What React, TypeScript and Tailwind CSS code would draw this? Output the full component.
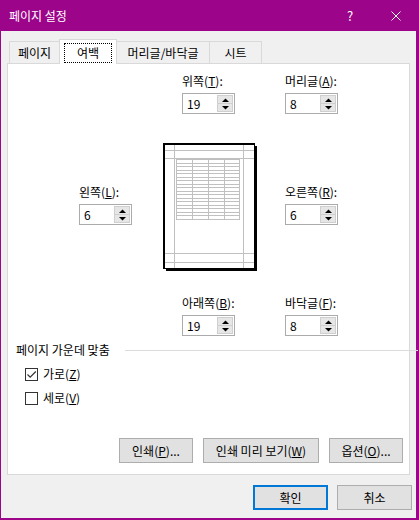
import React from "react";

const Up = () => (
  <svg width="7" height="4" viewBox="0 0 7 4">
    <polygon points="0,4 3.5,0.5 7,4" fill="#000" />
  </svg>
);
const Down = () => (
  <svg width="7" height="4" viewBox="0 0 7 4">
    <polygon points="0,0 3.5,3.5 7,0" fill="#000" />
  </svg>
);

function Field({ name, acc, value }: { name: string; acc: string; value: string }) {
  return (
    <div className="w-[53px] flex flex-col shrink-0">
      <div className="h-[16px] leading-[16px] text-[12px] whitespace-nowrap">
        {name}(<u className="underline-offset-[1px]">{acc}</u>):
      </div>
      <div className="mt-[4px] h-[21px] border border-[#ababab] bg-white flex">
        <div className="flex-1 pl-[4px] text-[12px] leading-[19px]">{value}</div>
        <div className="w-[16px] my-[1px] mr-[1px] flex flex-col">
          <div className="flex-1 bg-[#e6e6e6] border border-[#cfcfcf] flex items-center justify-center">
            <Up />
          </div>
          <div className="flex-1 -mt-px bg-[#e6e6e6] border border-[#cfcfcf] flex items-center justify-center">
            <Down />
          </div>
        </div>
      </div>
    </div>
  );
}

function Preview() {
  const rows: number[] = [];
  for (let i = 0; i <= 17; i++) rows.push(16 + Math.round(i * 3.5) + 0.5);
  const g = "#c0c0c0";
  return (
    <svg width="94" height="128" viewBox="0 0 94 128" shapeRendering="crispEdges" className="shrink-0">
      <rect x="3" y="3" width="91" height="125" fill="#000" />
      <rect x="0" y="0" width="92" height="126" fill="#000" />
      <rect x="2" y="2" width="89" height="123" fill="#fff" />
      <line x1="11.5" y1="2" x2="11.5" y2="125" stroke={g} />
      <line x1="80.5" y1="2" x2="80.5" y2="125" stroke={g} />
      <line x1="2" y1="7.5" x2="91" y2="7.5" stroke={g} />
      <line x1="2" y1="15.5" x2="91" y2="15.5" stroke={g} />
      <line x1="2" y1="110.5" x2="91" y2="110.5" stroke={g} />
      <line x1="2" y1="119.5" x2="91" y2="119.5" stroke={g} />
      {rows.map((y) => (
        <line key={y} x1="13" y1={y} x2="77" y2={y} stroke={g} />
      ))}
      {[13.5, 29.5, 45.5, 61.5, 76.5].map((x) => (
        <line key={x} x1={x} y1="16" x2={x} y2={rows[rows.length - 1]} stroke={g} />
      ))}
    </svg>
  );
}

function Btn({ w, children }: { w: string; children: React.ReactNode }) {
  return (
    <div
      className={`${w} h-[25px] border border-[#adadad] bg-[#e1e1e1] flex items-center justify-center text-[12px] whitespace-nowrap`}
    >
      {children}
    </div>
  );
}

export default function App() {
  return (
    <div className="w-[419px] h-[520px] bg-[#9c0589] flex flex-col font-['Noto_Sans_CJK_KR','Noto_Sans',sans-serif] text-black overflow-hidden">
      {/* Title bar */}
      <div className="h-[31px] flex items-center text-white shrink-0">
        <span className="ml-[9px] text-[12px] leading-[16px]">페이지 설정</span>
        <div className="flex-1" />
        <div className="w-[46px] h-full flex items-center justify-center text-[13px]">?</div>
        <div className="w-[46px] h-full flex items-center justify-center">
          <svg width="10" height="10" viewBox="0 0 10 10">
            <path d="M0.5 0.5 L9.5 9.5 M9.5 0.5 L0.5 9.5" stroke="#fff" strokeWidth="1" />
          </svg>
        </div>
      </div>

      {/* Body */}
      <div className="flex-1 bg-[#f0f0f0] ml-[1px] mr-[3px] mb-[2px] flex flex-col">
        {/* Tabs */}
        <div className="flex items-end h-[24px] pl-[8px] mt-[8px] text-[12px]">
          <div className="w-[51px] h-[22px] border border-b-0 border-[#d9d9d9] bg-[#f0f0f0] flex items-center justify-center">
            페이지
          </div>
          <div className="relative z-10 -ml-px w-[58px] h-[25px] -mb-px border border-b-0 border-[#d9d9d9] bg-white flex justify-center pt-[3px]">
            <div className="w-[48px] h-[20px] border border-dotted border-black flex items-center justify-center">
              여백
            </div>
          </div>
          <div className="-ml-px w-[94px] h-[22px] border border-b-0 border-[#d9d9d9] bg-[#f0f0f0] flex items-center justify-center">
            머리글/바닥글
          </div>
          <div className="-ml-px w-[53px] h-[22px] border border-b-0 border-[#d9d9d9] bg-[#f0f0f0] flex items-center justify-center">
            시트
          </div>
        </div>

        {/* Panel */}
        <div className="ml-[6px] w-[403px] h-[412px] border border-[#d9d9d9] bg-white flex flex-col">
          <div className="mt-[9px] flex pl-[174px] gap-[50px]">
            <Field name="위쪽" acc="T" value="19" />
            <Field name="머리글" acc="A" value="8" />
          </div>

          <div className="mt-[29px] flex items-start pl-[71px]">
            <div className="mt-[41px]">
              <Field name="왼쪽" acc="L" value="6" />
            </div>
            <div className="ml-[31px]">
              <Preview />
            </div>
            <div className="mt-[41px] ml-[28px]">
              <Field name="오른쪽" acc="R" value="6" />
            </div>
          </div>

          <div className="mt-[24px] flex pl-[174px] gap-[50px]">
            <Field name="아래쪽" acc="B" value="19" />
            <Field name="바닥글" acc="F" value="8" />
          </div>

          <div className="mt-[6px] flex items-center pl-[8px] -mr-[9px]">
            <span className="w-[109px] text-[12px] leading-[16px] whitespace-nowrap">페이지 가운데 맞춤</span>
            <div className="flex-1 h-px bg-[#dcdcdc]" />
          </div>

          <div className="mt-[8px] flex items-center pl-[17px] h-[16px]">
            <div className="w-[13px] h-[13px] border border-[#333333] bg-white flex items-center justify-center">
              <svg width="11" height="11" viewBox="0 0 11 11">
                <path d="M1.5 5.5 L4.2 8.2 L9.8 2.5" stroke="#333" strokeWidth="1.2" fill="none" />
              </svg>
            </div>
            <span className="ml-[5px] text-[12px] leading-[16px]">
              가로(<u className="underline-offset-[1px]">Z</u>)
            </span>
          </div>

          <div className="mt-[8px] flex items-center pl-[17px] h-[16px]">
            <div className="w-[13px] h-[13px] border border-[#333333] bg-white" />
            <span className="ml-[5px] text-[12px] leading-[16px]">
              세로(<u className="underline-offset-[1px]">V</u>)
            </span>
          </div>

          <div className="mt-[32px] flex justify-end pr-[6px] gap-[10px]">
            <Btn w="w-[74px]">
              인쇄(<u className="underline-offset-[1px]">P</u>)...
            </Btn>
            <Btn w="w-[116px]">
              인쇄 미리 보기(<u className="underline-offset-[1px]">W</u>)
            </Btn>
            <Btn w="w-[74px]">
              옵션(<u className="underline-offset-[1px]">O</u>)...
            </Btn>
          </div>
        </div>

        {/* Dialog buttons */}
        <div className="mt-[10px] flex pl-[252px] gap-[9px] text-[12px]">
          <div className="w-[75px] h-[25px] border-2 border-[#0078d7] bg-[#e1e1e1] flex items-center justify-center">
            확인
          </div>
          <div className="w-[75px] h-[25px] border border-[#adadad] bg-[#e1e1e1] flex items-center justify-center">
            취소
          </div>
        </div>
      </div>
    </div>
  );
}
